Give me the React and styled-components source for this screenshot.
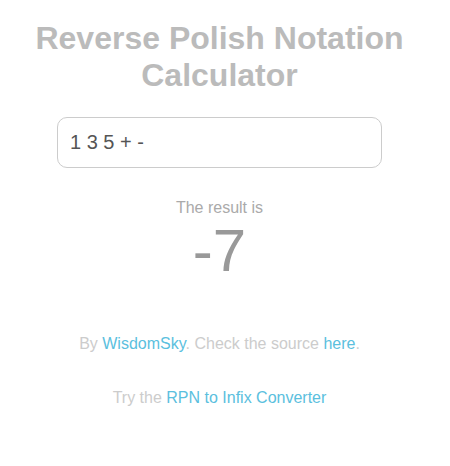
import React, { useState } from "react";
import styled, { createGlobalStyle } from "styled-components";

const GlobalStyle = createGlobalStyle`
  body {
    margin: 0;
    background: #fff;
    font-family: "Liberation Sans", Arial, sans-serif;
  }
`;

function App() {
  const [expr, setExpr] = useState("1 3 5 + -");

  return (
    <>
      <GlobalStyle />
      <PageStyled>
        <h1 className="title">Reverse Polish Notation Calculator</h1>
        <input className="expr" value={expr} onChange={(e) => setExpr(e.target.value)} />
        <div className="result">
          <p className="result-label">The result is</p>
          <p className="result-value">-7</p>
        </div>
        <div className="footer">
          <p>
            By <a href="#">WisdomSky</a>. Check the source <a href="#">here</a>.
          </p>
          <p>
            Try the <a href="#">RPN to Infix Converter</a>
          </p>
        </div>
      </PageStyled>
    </>
  );
}

const PageStyled = styled.main`
  width: 439px;
  padding-top: 20px;
  display: flex;
  flex-direction: column;
  align-items: center;
  text-align: center;

  .title {
    margin: 0;
    width: 400px;
    font-size: 32px;
    font-weight: bold;
    color: #bbbbbb;
  }

  .expr {
    box-sizing: border-box;
    margin-top: 23px;
    width: 325px;
    height: 51px;
    padding: 0 12px;
    border: 1px solid #cccccc;
    border-radius: 10px;
    font-family: inherit;
    font-size: 20px;
    color: #555555;
    outline: none;
  }

  .result {
    margin-top: 31px;
    p {
      margin: 0;
    }
    .result-label {
      font-size: 16px;
      color: #aaaaaa;
    }
    .result-value {
      font-size: 60px;
      line-height: 68px;
      color: #999999;
    }
  }

  .footer {
    margin-top: 50px;
    display: flex;
    flex-direction: column;
    gap: 36px;
    p {
      margin: 0;
      font-size: 16px;
      color: #cccccc;
    }
    a {
      color: #5bc0de;
      text-decoration: none;
    }
  }
`;

export default App;
